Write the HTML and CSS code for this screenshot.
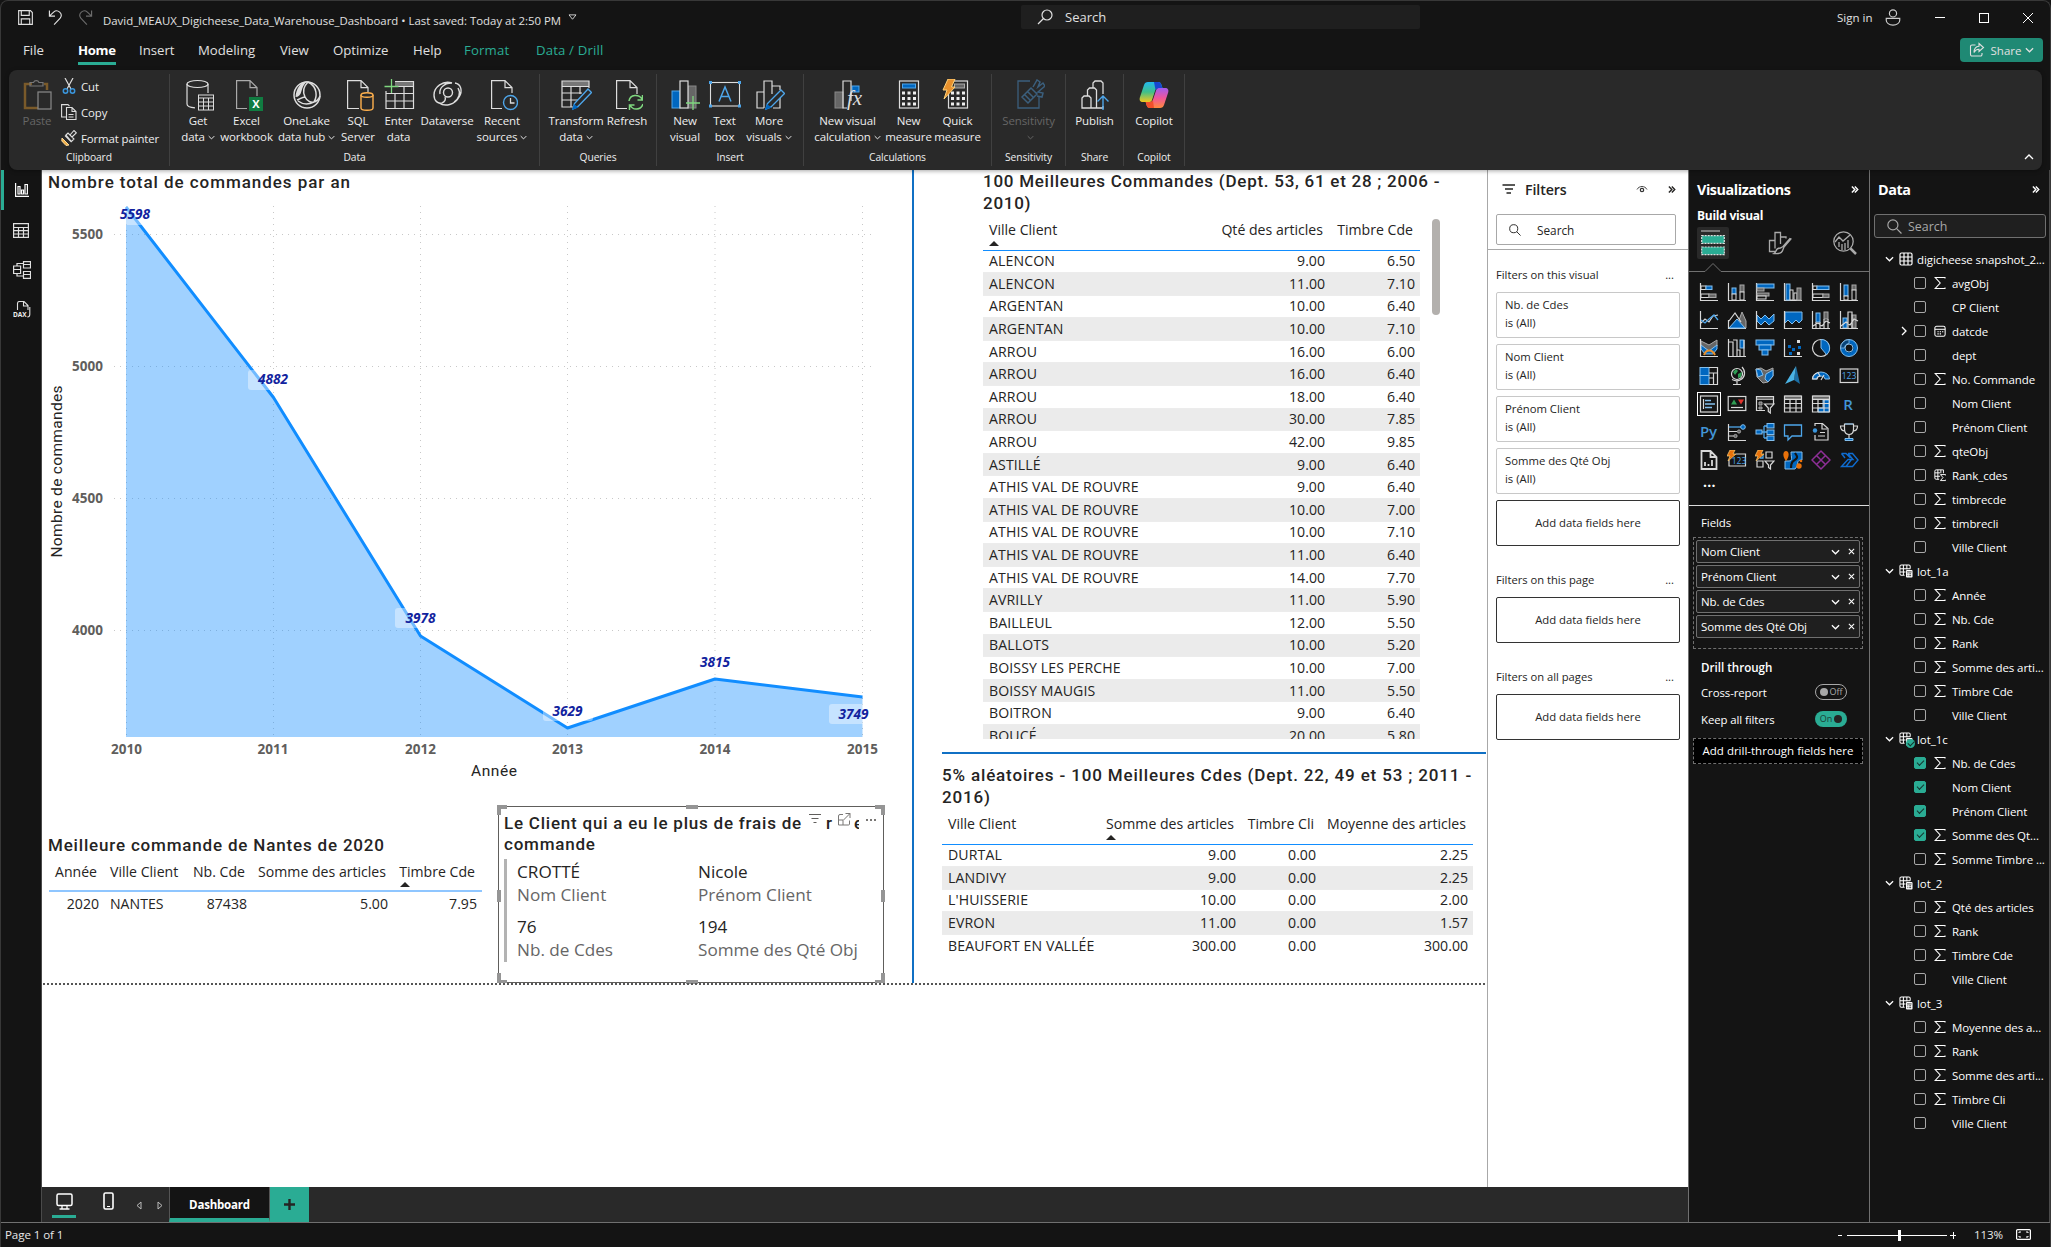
FILE: index.html
```html
<!DOCTYPE html>
<html lang="en">
<head>
<meta charset="utf-8">
<title>David_MEAUX_Digicheese_Data_Warehouse_Dashboard</title>
<link rel="stylesheet" href="styles.css">
</head>
<body>
<svg width="0" height="0" class="defs" aria-hidden="true">
  <symbol id="sigma" viewBox="0 0 12 14"><path d="M11 2.5V1.5H1.2L6.2 7 1.2 12.5H11v-1" fill="none" stroke="currentColor" stroke-width="1.1"/></symbol>
  <symbol id="chev" viewBox="0 0 10 6"><path d="M1 1l4 4 4-4" fill="none" stroke="currentColor" stroke-width="1.4"/></symbol>
  <symbol id="dbl" viewBox="0 0 9 9"><path d="M1 1l3.3 3.5L1 8M4.3 1l3.3 3.5L4.3 8" fill="none" stroke="currentColor" stroke-width="1.6"/></symbol>
  <symbol id="mag" viewBox="0 0 14 14"><circle cx="5.5" cy="5.5" r="4.7" fill="none" stroke="currentColor" stroke-width="1.1"/><path d="M9 9l4.5 4.5" stroke="currentColor" stroke-width="1.1"/></symbol>
  <symbol id="tbl" viewBox="0 0 14 14"><rect x="1" y="1" width="12" height="12" rx="1.5" fill="none" stroke="currentColor" stroke-width="1.2"/><path d="M1 5h12M1 9h12M5 1v12M9 1v12" stroke="currentColor" stroke-width="1.2"/></symbol>
  <symbol id="tblc" viewBox="0 0 15 15"><path d="M6 12H2.500a1.500 1.500 0 0 1-1.500-1.500V2.500A1.500 1.500 0 0 1 2.500 1h8A1.500 1.500 0 0 1 12 2.500V5M1 5h11M1 8.500h6M4.700 1v11M8.400 1v5" fill="none" stroke="currentColor" stroke-width="1.1"/><rect x="7.500" y="6.500" width="7" height="8" rx="1" fill="currentColor"/><path d="M8.500 8.500h5M9 10.500h1M11 10.500h2M9 12.500h1M11 12.500h2" stroke="#141414" stroke-width=".9"/></symbol>
  <symbol id="xx" viewBox="0 0 8 8"><path d="M1 1l6 6M7 1L1 7" stroke="currentColor" stroke-width="1.2"/></symbol>
</svg>

<header class="titlebar">
  <svg class="t-save" viewBox="0 0 16 16"><path d="M.7.700h12.600l2 2v12.600H.7zM3.500.7v5h8.500v-5M3.500 15V9.500h9V15" fill="none" stroke="#e0e0e0" stroke-width="1.200"/></svg>
  <svg class="t-undo" viewBox="0 0 16 18"><path d="M1.500 1.500v6h6M1.700 7.300L6 3.200a4.800 4.800 0 0 1 7 6.500L6.500 16.500" fill="none" stroke="#e0e0e0" stroke-width="1.200"/></svg>
  <svg class="t-redo" viewBox="0 0 16 18"><path d="M14.500 1.500v6h-6M14.300 7.300L10 3.200a4.800 4.800 0 0 0-7 6.500l6.500 6.800" fill="none" stroke="#6b6b6b" stroke-width="1.200"/></svg>
  <span class="t-name">David_MEAUX_Digicheese_Data_Warehouse_Dashboard • Last saved: Today at 2:50 PM</span>
  <svg class="t-drop" viewBox="0 0 10 8"><path d="M1 1h8L5 6z" fill="none" stroke="#e0e0e0"/></svg>
  <div class="t-search"><svg viewBox="0 0 16 16"><circle cx="10" cy="6" r="5" fill="none" stroke="#e0e0e0" stroke-width="1.200"/><path d="M6.500 9.500L1 15" stroke="#e0e0e0" stroke-width="1.200"/></svg><span>Search</span></div>
  <span class="t-sign">Sign in</span>
  <svg class="t-user" viewBox="0 0 20 20"><circle cx="10" cy="6" r="4" fill="none" stroke="#ccc" stroke-width="1.300"/><path d="M2.500 11.500h15v2c0 3-3 5.500-7.500 5.500s-7.500-2.500-7.500-5.500z" fill="none" stroke="#ccc" stroke-width="1.300"/></svg>
  <svg class="t-min" viewBox="0 0 12 12"><path d="M1 6.500h10" stroke="#fff"/></svg>
  <svg class="t-max" viewBox="0 0 12 12"><rect x="1.500" y="1.500" width="9" height="9" fill="none" stroke="#fff"/></svg>
  <svg class="t-close" viewBox="0 0 12 12"><path d="M1 1l10 10M11 1L1 11" stroke="#fff"/></svg>
</header>

<nav class="menu">
  <span class="m1">File</span><span class="m2 on">Home</span><span class="m3">Insert</span><span class="m4">Modeling</span><span class="m5">View</span><span class="m6">Optimize</span><span class="m7">Help</span><span class="m8 ctx">Format</span><span class="m9 ctx">Data / Drill</span>
  <button class="share"><svg viewBox="0 0 16 16"><path d="M6.500 3H3a1.500 1.500 0 0 0-1.500 1.500v8A1.500 1.500 0 0 0 3 14h8.500a1.500 1.500 0 0 0 1.500-1.500V11M10 1.500l4.500 4-4.500 4V7.200C7.500 7 6 8.500 5 10.500c0-3.500 1.500-6 5-6.300z" fill="none" stroke="#e0e0e0" stroke-width="1.100"/></svg>Share<svg class="sc"><use href="#chev"/></svg></button>
</nav>

<section class="ribbon">
  <div class="grp g1">
    <div class="clip">
      <div class="ri paste"><svg viewBox="0 0 32 32"><path d="M11 5H4v24h13M23 5h3v6" fill="none" stroke="#7a5a2a" stroke-width="2.500"/><path d="M9 7V3.500h3.500a3 3 0 0 1 5.500 0H22V7z" fill="none" stroke="#777" stroke-width="1.200"/><rect x="17" y="13" width="13" height="17" fill="#292929" stroke="#8a8a8a" stroke-width="1.200"/></svg><p>Paste</p></div>
      <ul>
        <li><svg viewBox="0 0 16 16"><path d="M4 0l6 11M12 0L6 11" stroke="#ddd" stroke-width="1.200"/><circle cx="4.500" cy="13" r="2.200" fill="none" stroke="#3a96dd" stroke-width="1.500"/><circle cx="11.500" cy="13" r="2.200" fill="none" stroke="#3a96dd" stroke-width="1.500"/></svg>Cut</li>
        <li><svg viewBox="0 0 16 16"><path d="M5 13H.6V.6H7l1.500 1.500M5.500 3.500h5.500l4 4v8H5.500zM11 3.500v4h4M7.500 10.500h5M7.500 13h5" fill="none" stroke="#ddd" stroke-width="1.100"/></svg>Copy</li>
        <li><svg viewBox="0 0 16 16"><path d="M1 8l7 7-3 .5L.8 11z" fill="#f2b04a" stroke="#f7d79a"/><path d="M4 5.500l6.500 6.500M5 5l2-2 6 6-2.500 2.500zM9 5l4-4.500 2.300 2.300L11 7" fill="none" stroke="#ddd" stroke-width="1.100"/></svg>Format painter</li>
      </ul>
    </div>
    <h6>Clipboard</h6>
  </div>
  <div class="grp g2">
    <div class="items">
      <div class="ri"><svg viewBox="0 0 32 32"><path d="M26 14V5M5 5v20c0 2 3 3.500 8 3.800" fill="none" stroke="#ddd" stroke-width="1.200"/><ellipse cx="15.500" cy="5" rx="10.500" ry="3.500" fill="none" stroke="#ddd" stroke-width="1.200"/><rect x="16.500" y="16" width="15" height="15" fill="#292929" stroke="#ddd"/><path d="M16.500 19h15M16.500 23h15M16.500 27h15M21.500 19v12M26.500 19v12" stroke="#ddd"/></svg><p>Get<br>data<svg class="c"><use href="#chev"/></svg></p></div>
      <div class="ri"><svg viewBox="0 0 32 32"><path d="M16 29.500H5.600V1.600H19l7 7V17M19 1.600v7h7" fill="none" stroke="#aaa" stroke-width="1.200"/><rect x="18" y="18" width="14" height="14" fill="#107c41"/><text x="25" y="29" class="xl">X</text></svg><p>Excel<br>workbook</p></div>
      <div class="ri"><svg viewBox="0 0 32 32"><circle cx="16" cy="16" r="13" fill="none" stroke="#ddd" stroke-width="1.500"/><path d="M17 2C9 2 5 11 4.500 18c3 0 5-2 6-6 1-4 3-8 6.500-10z" fill="#ddd"/><path d="M17 3c-4 4-6 9-3 15 2 4 6 6 9 5 3-5 4-15-6-20zM6 21c3-1 5-3 8-3M23 23c2 0 5-3 6-6M7 22c4 3 10 4 16 1" fill="none" stroke="#ddd" stroke-width="1.500"/></svg><p>OneLake<br>data hub<svg class="c"><use href="#chev"/></svg></p></div>
      <div class="ri"><svg viewBox="0 0 32 32"><path d="M17 29.500H5.600V1.600H19l7 7V13M19 1.600v7h7" fill="none" stroke="#ddd" stroke-width="1.200"/><path d="M19 16v13c0 3 12 3 12 0V16" fill="#292929" stroke="#ffb14e" stroke-width="1.400"/><ellipse cx="25" cy="16" rx="6" ry="2.300" fill="#292929" stroke="#ffb14e" stroke-width="1.400"/></svg><p>SQL<br>Server</p></div>
      <div class="ri"><svg viewBox="0 0 32 32"><path d="M12 3h18v4H12z" fill="#777"/><path d="M12 2.500h18.500v27H3V12M12 7.500h18.500M3 14.500h27.500M3 22h27.500M12 14.500v15M21 7.500v22" fill="none" stroke="#ddd" stroke-width="1.200"/><path d="M8.500 0v14M1.500 7.500h14" stroke="#7fd77f" stroke-width="1.300"/></svg><p>Enter<br>data</p></div>
      <div class="ri"><svg viewBox="0 0 32 32"><path d="M21 4C12 1 3 8 3 16c0 6 4 9 8 8 3-1 4-4 3-6M24 4c6 1 8 8 4 14-4 8-14 10-20 6M21 4c-9 0-13 6-12 11M23 23c5-3 7-9 4-14" fill="none" stroke="#ddd" stroke-width="1.400"/><circle cx="17" cy="13.500" r="4.500" fill="none" stroke="#ddd" stroke-width="1.400"/></svg><p>Dataverse</p></div>
      <div class="ri"><svg viewBox="0 0 32 32"><path d="M16 29.500H5.600V1.600H19l7 7V14M19 1.600v7h7" fill="none" stroke="#ddd" stroke-width="1.200"/><circle cx="24.500" cy="23.500" r="7" fill="#292929" stroke="#4ea6ea" stroke-width="1.400"/><path d="M24.500 19v5h4" fill="none" stroke="#ddd" stroke-width="1.300"/></svg><p>Recent<br>sources<svg class="c"><use href="#chev"/></svg></p></div>
    </div>
    <h6>Data</h6>
  </div>
  <div class="grp g3">
    <div class="items">
      <div class="ri"><svg viewBox="0 0 32 32"><path d="M2 2h27v5H2z" fill="#777"/><path d="M29 9V2H2v26h12M2 7.500h27M2 14h20M2 21h16M11 7.500V28M20 7.500V15" fill="none" stroke="#ddd" stroke-width="1.200"/><path d="M13 30l1.500-5.500L28 10l3.500 3.500L18 27.500z" fill="#292929" stroke="#4ea6ea" stroke-width="1.400"/><path d="M12 31l2-6 4.500 3.500z" fill="#0067c0"/></svg><p>Transform<br>data<svg class="c"><use href="#chev"/></svg></p></div>
      <div class="ri"><svg viewBox="0 0 32 32"><path d="M16 29.500H5.600V1.600H19l7 7V15M19 1.600v7h7" fill="none" stroke="#ddd" stroke-width="1.200"/><path d="M18 22c1-7 10-7 13-2M31.500 16v5h-5M32 25c-2 6-10 7-13 1M18.500 31v-5h5" fill="none" stroke="#7fd77f" stroke-width="1.500"/></svg><p>Refresh</p></div>
    </div>
    <h6>Queries</h6>
  </div>
  <div class="grp g4">
    <div class="items">
      <div class="ri"><svg viewBox="0 0 32 32"><rect x="3" y="12" width="8" height="17" fill="#0067c0" stroke="#4ea6ea"/><rect x="19" y="7" width="8" height="22" fill="#666" stroke="#888"/><rect x="11" y="2" width="8" height="27" fill="#292929" stroke="#ddd" stroke-width="1.200"/><path d="M24 17v14M17 24h14" stroke="#7fd77f" stroke-width="1.300"/></svg><p>New<br>visual</p></div>
      <div class="ri"><svg viewBox="0 0 32 32"><rect x="1.500" y="3.500" width="29" height="23.500" fill="none" stroke="#ddd" stroke-width="1.100"/><path d="M0 2h3v3H0zM29 2h3v3h-3zM0 25.500h3v3H0zM29 25.500h3v3h-3z" fill="#4ea6ea"/><path d="M10 22.500L16 8l6 14.500M12.500 17.500h7" fill="none" stroke="#4ea6ea" stroke-width="1.500"/></svg><p>Text<br>box</p></div>
      <div class="ri"><svg viewBox="0 0 32 32"><path d="M11 29H4V13h7M11 29V2h8v13M19 7h8v4M27 19v10h-7" fill="none" stroke="#ddd" stroke-width="1.200"/><path d="M13 30l1.500-5.500L28 11l3.500 3.500L18 28z" fill="#292929" stroke="#4ea6ea" stroke-width="1.400"/><path d="M12 31l2-6 4.500 3.500z" fill="#0067c0"/></svg><p>More<br>visuals<svg class="c"><use href="#chev"/></svg></p></div>
    </div>
    <h6>Insert</h6>
  </div>
  <div class="grp g5">
    <div class="items">
      <div class="ri"><svg viewBox="0 0 32 32"><rect x="20" y="7" width="7" height="6" fill="#0067c0" stroke="#4ea6ea"/><rect x="3" y="13" width="8" height="16" fill="#666" stroke="#888"/><path d="M15 29h-4V2h8v20" fill="none" stroke="#ddd" stroke-width="1.200"/><text x="15" y="26" class="fx">fx</text></svg><p>New visual<br>calculation<svg class="c"><use href="#chev"/></svg></p></div>
      <div class="ri"><svg viewBox="0 0 32 32"><rect x="6.500" y="2" width="19" height="27" fill="none" stroke="#ddd" stroke-width="1.200"/><rect x="9.500" y="5" width="13" height="4" fill="#0067c0" stroke="#4ea6ea"/><path d="M9 14h14M9 19.500h14M9 25h14" stroke="#eee" stroke-width="3" stroke-dasharray="3 2.500"/></svg><p>New<br>measure</p></div>
      <div class="ri"><svg viewBox="0 0 32 32"><rect x="6.500" y="2" width="19" height="27" fill="none" stroke="#ddd" stroke-width="1.200"/><rect x="12.500" y="5" width="10" height="4" fill="#666" stroke="#aaa"/><path d="M9 14h14M9 19.500h14M9 25h14" stroke="#eee" stroke-width="3" stroke-dasharray="3 2.500"/><path d="M6 0h7L9.500 8H13L2 20l3-9H1z" fill="#e8912d" stroke="#ffd27a"/></svg><p>Quick<br>measure</p></div>
    </div>
    <h6>Calculations</h6>
  </div>
  <div class="grp g6">
    <div class="items">
      <div class="ri off"><svg viewBox="0 0 32 32"><path d="M17 2H5v27h21V18" fill="none" stroke="#3b5f7d" stroke-width="1.300"/><path d="M9 18l9-9 6 6-9 9zM12 16l5 5M15 13l5 5M20 8l4-7 3 2-2 5 5-4 2 3-7 6 5 1-1 4-5-1" fill="none" stroke="#3b5f7d" stroke-width="1.500"/></svg><p>Sensitivity<br><svg class="c"><use href="#chev"/></svg></p></div>
    </div>
    <h6>Sensitivity</h6>
  </div>
  <div class="grp g7">
    <div class="items">
      <div class="ri"><svg viewBox="0 0 32 32"><path d="M3 29V19l2-2h5l2 2v10zM8.500 17v-6l2-2h5l2 2v18H12M14 9V4l2-2h6l2 2v11M17 29h7v-2" fill="none" stroke="#ddd" stroke-width="1.300"/><path d="M24 31V17M18.500 22.500L24 17l5.500 5.500" fill="none" stroke="#4ea6ea" stroke-width="1.400"/></svg><p>Publish</p></div>
    </div>
    <h6>Share</h6>
  </div>
  <div class="grp g8">
    <div class="items">
      <div class="ri"><svg viewBox="0 0 32 32"><defs><linearGradient id="cpa" x1="0" y1="0" x2="0" y2="1"><stop offset="0" stop-color="#22b8f0"/><stop offset=".5" stop-color="#3fc08a"/><stop offset="1" stop-color="#f4c81c"/></linearGradient><linearGradient id="cpb" x1="0" y1="0" x2="0" y2="1"><stop offset="0" stop-color="#a05cf0"/><stop offset=".5" stop-color="#f0569a"/><stop offset="1" stop-color="#ff8a3c"/></linearGradient></defs><path d="M10 3h10c2 0 3 1 3.500 3l1 3h-4c-2 0-3 1-3.500 3l-3 9c-.5 1.500-1.500 2-3 2H5c-3 0-4-2-3-5L6 6c.6-2 2-3 4-3z" fill="url(#cpa)"/><path d="M22 29H12c-2 0-3-1-3.500-3l-.8-3h4c2 0 3-1 3.500-3l3-9c.5-1.500 1.500-2 3-2H27c3 0 4 2 3 5l-4 12c-.6 2-2 3-4 3z" fill="url(#cpb)"/><path d="M16 3h4c2 0 3 1 3.500 3l1 3H21c-2 0-3 1-3.500 2z" fill="#1747d1"/><path d="M16 29h-4c-2 0-3-1-3.500-3l-.8-3H12c1.500 0 2.500-.6 3-1.500z" fill="#f0502c"/></svg><p>Copilot</p></div>
    </div>
    <h6>Copilot</h6>
  </div>
  <svg class="collapse" viewBox="0 0 10 6"><path d="M1 5l4-4 4 4" fill="none" stroke="#fff" stroke-width="1.300"/></svg>
</section>

<main>
  <aside class="rail">
    <div class="on"><svg width="14" height="14" viewBox="0 0 14 14"><path d="M.6 0v13.400H14M3 11V3.500h2V11zM6.500 11V7h2v4zM10 11V1.500h2.400V11z" fill="none" stroke="#fff" stroke-width="1.200"/></svg></div>
    <div><svg width="16" height="15" viewBox="0 0 16 15"><path d="M.6.700h14.800v13.600H.6zM.6 4.500h14.800M.6 7.700h14.800M.6 11h14.800M5.500 4.500v10M10.500 4.500v10" fill="none" stroke="#e0e0e0" stroke-width="1.200"/></svg></div>
    <div><svg width="18" height="18" viewBox="0 0 18 18"><path d="M.6 5h7v7.500h-7zM.6 8.500h7M10.500.7h7V7h-7zM10.500 3.500h7M10.500 10.500h7v6.800h-7zM10.500 13.500h7M4 5V2.500h6.500M4 12.500V15h6.500" fill="none" stroke="#e0e0e0" stroke-width="1.200"/></svg></div>
    <div><svg width="18" height="18" viewBox="0 0 18 18"><path d="M4.500 9V2.500a2 2 0 0 1 2-2H11l4 4V9M10.500.7V5h4.500M16.800 6v7.500a2.500 2.500 0 0 1-2.500 2.500" fill="none" stroke="#e0e0e0" stroke-width="1.100"/><text x="0" y="16" class="dax">DAX</text></svg></div>
  </aside>

  <div class="center">
    <div class="canvas">
      <svg class="chart" width="865" height="620" viewBox="43 170 865 620">
        <text x="48" y="187.500" class="din" textLength="302">Nombre total de commandes par an</text>
        <path d="M114 234.500H872M114 366.500H872M114 498.500H872M114 630.500H872M126.500 206V737M273.500 206V737M420.500 206V737M567.500 206V737M715 206V737M862.500 206V737" class="grid"/>
        <path d="M126 207L273.500 397.500 420.500 636 567.500 728 715 679 862.500 697V737H126z" class="area"/>
        <path d="M126 207L273.500 397.500 420.500 636 567.500 728 715 679 862.500 697" class="line"/>
        <g class="lb"><rect x="111" y="205" width="50" height="20" rx="3"/><rect x="248" y="370" width="50" height="20" rx="3"/><rect x="395" y="608" width="50" height="20" rx="3"/><rect x="543" y="701" width="50" height="20" rx="3"/><rect x="829" y="704" width="50" height="20" rx="3"/></g>
        <g class="lt"><text x="135" y="218.500">5598</text><text x="273" y="383.500">4882</text><text x="420.500" y="622.500">3978</text><text x="567.500" y="715.500">3629</text><text x="715" y="666.500">3815</text><text x="853.500" y="718.500">3749</text></g>
        <g class="ya"><text x="103" y="239">5500</text><text x="103" y="371">5000</text><text x="103" y="503">4500</text><text x="103" y="635">4000</text></g>
        <g class="xa"><text x="126.500" y="753.500">2010</text><text x="273" y="753.500">2011</text><text x="420.500" y="753.500">2012</text><text x="567.500" y="753.500">2013</text><text x="715" y="753.500">2014</text><text x="862.500" y="753.500">2015</text></g>
        <text x="494" y="775.500" class="at" textLength="46">Année</text>
        <text transform="translate(61.500 471.500) rotate(-90)" class="at" textLength="172">Nombre de commandes</text>
      </svg>

      <section class="vis nantes">
        <h2>Meilleure commande de Nantes de 2020</h2>
        <table>
          <colgroup><col style="width:55px"><col style="width:82px"><col style="width:66px"><col style="width:141px"><col style="width:89px"></colgroup>
          <thead><tr><th class="r">Année</th><th>Ville Client</th><th class="r">Nb. Cde</th><th class="r">Somme des articles</th><th class="r srt">Timbre Cde</th></tr></thead>
          <tbody><tr><td class="r">2020</td><td>NANTES</td><td class="r">87438</td><td class="r">5.00</td><td class="r">7.95</td></tr></tbody>
        </table>
      </section>

      <section class="vis card">
        <h2>Le Client qui a eu le plus de frais de<br>commande</h2>
        <dl><div><dt>CROTTÉ</dt><dd>Nom Client</dd></div><div><dt>Nicole</dt><dd>Prénom Client</dd></div><div><dt>76</dt><dd>Nb. de Cdes</dd></div><div><dt>194</dt><dd>Somme des Qté Obj</dd></div></dl>
        <div class="tools">
          <svg width="18" height="18" viewBox="0 0 18 18"><path d="M3 3.500h12M5.500 7.500h7M7.500 11.500h3" stroke="#605e5c" stroke-width="1.100"/></svg><b>r</b>
          <svg width="18" height="18" viewBox="0 0 18 18"><path d="M8 3.500H5a1.500 1.500 0 0 0-1.500 1.500v9h10a1 1 0 0 0 1-1V9.500M3.500 9H8v5M10.500 2.500h4.500V7M15 2.500L8.500 9" fill="none" stroke="#797775"/></svg><b class="part">e</b>
          <svg width="12" height="12" viewBox="0 0 12 12"><path d="M1 6h2M5 6h2M9 6h2" stroke="#797775" stroke-width="2"/></svg>
        </div>
        <i class="h h-tl"></i><i class="h h-t"></i><i class="h h-tr"></i><i class="h h-l"></i><i class="h h-r"></i><i class="h h-bl"></i><i class="h h-b"></i><i class="h h-br"></i>
      </section>

      <section class="vis top100">
        <h2>100 Meilleures Commandes (Dept. 53, 61 et 28 ; 2006 -<br>2010)</h2>
        <div class="scroll">
        <table>
          <colgroup><col style="width:233px"><col style="width:114px"><col style="width:90px"></colgroup>
          <thead><tr><th class="srt">Ville Client</th><th class="r">Qté des articles</th><th class="r">Timbre Cde</th></tr></thead>
          <tbody>
            <tr><td>ALENCON</td><td>9.00</td><td>6.50</td></tr>
            <tr><td>ALENCON</td><td>11.00</td><td>7.10</td></tr>
            <tr><td>ARGENTAN</td><td>10.00</td><td>6.40</td></tr>
            <tr><td>ARGENTAN</td><td>10.00</td><td>7.10</td></tr>
            <tr><td>ARROU</td><td>16.00</td><td>6.00</td></tr>
            <tr><td>ARROU</td><td>16.00</td><td>6.40</td></tr>
            <tr><td>ARROU</td><td>18.00</td><td>6.40</td></tr>
            <tr><td>ARROU</td><td>30.00</td><td>7.85</td></tr>
            <tr><td>ARROU</td><td>42.00</td><td>9.85</td></tr>
            <tr><td>ASTILLÉ</td><td>9.00</td><td>6.40</td></tr>
            <tr><td>ATHIS VAL DE ROUVRE</td><td>9.00</td><td>6.40</td></tr>
            <tr><td>ATHIS VAL DE ROUVRE</td><td>10.00</td><td>7.00</td></tr>
            <tr><td>ATHIS VAL DE ROUVRE</td><td>10.00</td><td>7.10</td></tr>
            <tr><td>ATHIS VAL DE ROUVRE</td><td>11.00</td><td>6.40</td></tr>
            <tr><td>ATHIS VAL DE ROUVRE</td><td>14.00</td><td>7.70</td></tr>
            <tr><td>AVRILLY</td><td>11.00</td><td>5.90</td></tr>
            <tr><td>BAILLEUL</td><td>12.00</td><td>5.50</td></tr>
            <tr><td>BALLOTS</td><td>10.00</td><td>5.20</td></tr>
            <tr><td>BOISSY LES PERCHE</td><td>10.00</td><td>7.00</td></tr>
            <tr><td>BOISSY MAUGIS</td><td>11.00</td><td>5.50</td></tr>
            <tr><td>BOITRON</td><td>9.00</td><td>6.40</td></tr>
            <tr><td>BOUCÉ</td><td>20.00</td><td>5.80</td></tr>
          </tbody>
        </table>
        </div>
        <i class="bar"></i>
      </section>

      <section class="vis alea">
        <h2>5% aléatoires - 100 Meilleures Cdes (Dept. 22, 49 et 53 ; 2011 -<br>2016)</h2>
        <table>
          <colgroup><col style="width:158px"><col style="width:141px"><col style="width:80px"><col style="width:152px"></colgroup>
          <thead><tr><th>Ville Client</th><th class="r srt">Somme des articles</th><th class="r">Timbre Cli</th><th class="r">Moyenne des articles</th></tr></thead>
          <tbody>
            <tr><td>DURTAL</td><td>9.00</td><td>0.00</td><td>2.25</td></tr>
            <tr><td>LANDIVY</td><td>9.00</td><td>0.00</td><td>2.25</td></tr>
            <tr><td>L'HUISSERIE</td><td>10.00</td><td>0.00</td><td>2.00</td></tr>
            <tr><td>EVRON</td><td>11.00</td><td>0.00</td><td>1.57</td></tr>
            <tr><td>BEAUFORT EN VALLÉE</td><td>300.00</td><td>0.00</td><td>300.00</td></tr>
          </tbody>
        </table>
      </section>
      <i class="vline"></i><i class="hline"></i><i class="edge"></i>
    </div>
  </div>

  <aside class="filters">
    <div class="fhead"><svg width="14" height="10" viewBox="0 0 14 10"><path d="M.5 1h12.500M3 5h8M4.500 9h4.500" stroke="#252423" stroke-width="1.400"/></svg><b>Filters</b><svg class="eye" width="12" height="8" viewBox="0 0 12 8"><path d="M1 4.500C3 .5 9 .5 11 4.500" fill="none" stroke="#444"/><circle cx="6" cy="5" r="1.700" fill="none" stroke="#333" stroke-width="1.200"/></svg><svg width="8" height="9"><use href="#dbl"/></svg></div>
    <div class="fsearch"><svg width="12" height="12"><use href="#mag"/></svg>Search</div>
    <h3>Filters on this visual<i>...</i></h3>
    <div class="fc">Nb. de Cdes<br>is (All)</div>
    <div class="fc">Nom Client<br>is (All)</div>
    <div class="fc">Prénom Client<br>is (All)</div>
    <div class="fc">Somme des Qté Obj<br>is (All)</div>
    <div class="fa">Add data fields here</div>
    <h3>Filters on this page<i>...</i></h3>
    <div class="fa">Add data fields here</div>
    <h3>Filters on all pages<i>...</i></h3>
    <div class="fa">Add data fields here</div>
  </aside>

  <aside class="viz">
    <div class="ph"><b>Visualizations</b><svg width="8" height="9"><use href="#dbl"/></svg></div>
    <h4>Build visual</h4>
    <div class="tabs">
      <span class="on"><svg width="24" height="26" viewBox="0 0 24 26"><path d="M0 1h19" stroke="#ccc" stroke-width="1.200"/><rect x=".7" y="5.700" width="22.600" height="7.600" fill="#2aac94" stroke="#ddd" stroke-width="1.200" stroke-dasharray="2 1"/><rect x=".7" y="17" width="22.600" height="7.600" fill="#2aac94" stroke="#ddd" stroke-width="1.200" stroke-dasharray="2 1"/></svg></span>
      <span><svg width="24" height="24" viewBox="0 0 24 24"><path d="M8 20.500H1.500V9.500H7v8M7 9.500v-8h5.500V13M12.500 6H18v1.500M22 7.500l-7 8-2.500 1.500c-3 0-4 1-4.500 3-.5 1.500-1 2-2 2.500 4 .5 8 0 9-4l1-2.500 7-8z" fill="none" stroke="#aaa" stroke-width="1.300"/></svg></span>
      <span><svg width="24" height="24" viewBox="0 0 24 24"><circle cx="10.500" cy="10.500" r="9.700" fill="none" stroke="#aaa" stroke-width="1.300"/><path d="M2 11l4-5 4 4 7-6M6 16v-5M9 19v-6M12 19v-7M15 17V9" fill="none" stroke="#aaa" stroke-width="1.300"/><path d="M17.500 17.500l5.500 5.500" stroke="#aaa" stroke-width="2.500"/></svg></span>
    </div>
    <svg class="notch" width="180" height="9" viewBox="0 0 180 9"><path d="M0 8.500h16l8-8 8 8h148" fill="none" stroke="#707070"/></svg>
    <div class="vg">
      <svg viewBox="0 0 20 20"><path d="M1.500 1v17.500H19" class="w"/><rect x="2" y="4" width="5" height="3.500" class="k"/><rect x="7" y="4" width="6" height="3.500" class="b"/><rect x="2" y="12" width="8" height="3.500" class="k"/><rect x="10" y="12" width="7" height="3.500" class="g"/></svg>
      <svg viewBox="0 0 20 20"><path d="M1.500 1v17.500H19" class="w"/><rect x="5" y="6" width="4" height="6" class="b"/><rect x="5" y="12" width="4" height="6" class="k"/><rect x="13" y="3" width="4" height="7" class="g"/><rect x="13" y="10" width="4" height="8" class="k"/></svg>
      <svg viewBox="0 0 20 20"><path d="M1.500 1v17.500H19" class="w"/><rect x="2" y="2" width="17" height="4" class="b"/><rect x="2" y="6" width="7" height="3" class="g"/><rect x="2" y="11" width="12" height="3" class="g"/><rect x="2" y="14" width="9" height="3" class="k"/></svg>
      <svg viewBox="0 0 20 20"><path d="M1.500 1v17.500H19" class="w"/><rect x="3" y="2" width="4" height="16" class="b"/><rect x="7" y="8" width="3" height="10" class="k"/><rect x="11" y="11" width="3" height="7" class="k"/><rect x="14" y="6" width="4" height="12" class="g"/></svg>
      <svg viewBox="0 0 20 20"><path d="M1.500 1v17.500H19" class="w"/><rect x="2" y="4" width="4" height="3.500" class="k"/><rect x="6" y="4" width="12" height="3.500" class="b"/><rect x="2" y="12" width="10" height="3.500" class="k"/><rect x="12" y="12" width="6" height="3.500" class="g"/></svg>
      <svg viewBox="0 0 20 20"><path d="M1.500 1v17.500H19" class="w"/><rect x="5" y="3" width="4" height="11" class="b"/><rect x="5" y="14" width="4" height="4" class="k"/><rect x="13" y="3" width="4" height="5" class="g"/><rect x="13" y="8" width="4" height="10" class="k"/></svg>

      <svg viewBox="0 0 20 20"><path d="M1.500 1v17.500H19M2 13l4-4 4 3 4-6 5-1" class="w"/><path d="M2 10l4 3 4-4 5-4 4 5" class="l"/></svg>
      <svg viewBox="0 0 20 20"><path d="M9 18l6-16 4 9v7z" class="g"/><path d="M1.500 10v8.500H19M2 11l6-8 6 9" class="w"/><path d="M2 18l8-9 8 9z" class="b"/></svg>
      <svg viewBox="0 0 20 20"><path d="M2 5l4 4 4-4 4 4 5-5v7l-5 4-4-4-4 4-4-4z" class="b"/><path d="M1.500 1v17.500H19" class="w"/></svg>
      <svg viewBox="0 0 20 20"><path d="M2 2h17v8l-3 3-3-3-4 4-4-4-3 3z" class="b"/><path d="M1.500 1v17.500H19" class="w"/></svg>
      <svg viewBox="0 0 20 20"><rect x="5" y="3" width="4" height="9" class="b"/><rect x="13" y="2" width="4" height="7" class="g"/><path d="M1.500 1v17.500H19M5 12v6M9 12v6M13 9v9M17 9v9M2 16l5-3 4 3 4-5 4 2" class="w"/></svg>
      <svg viewBox="0 0 20 20"><rect x="4" y="8" width="4" height="10" class="b"/><rect x="13" y="5" width="4" height="13" class="g"/><path d="M1.500 1v17.500H19M9 18V2h4v16M2 16l5-4 4 3 4-6 4 2" class="w"/></svg>

      <svg viewBox="0 0 20 20"><path d="M2 3l8 4 8-5v6l-8 5-8-5z" class="g"/><path d="M2 7l8 6 8-6v4l-4 5H6l-4-5z" class="b"/><path d="M5 17c2-6 8-6 11 0" fill="none" stroke="#e8912d" stroke-width="2"/><path d="M1.500 1v17.500H19" class="w"/></svg>
      <svg viewBox="0 0 20 20"><rect x="13" y="2" width="4" height="8" class="b"/><path d="M1.500 1v17.500H19M2 4h4v14M6 2h4v10h3v6M17 2v16M10 12v6" class="w"/></svg>
      <svg viewBox="0 0 20 20"><rect x="1" y="2" width="18" height="5" class="b"/><rect x="4" y="7" width="12" height="5" class="b"/><rect x="7" y="12" width="6" height="5" class="b"/></svg>
      <svg viewBox="0 0 20 20"><path d="M1.500 1v17.500H19" class="w"/><path d="M5 7h3v3H5zM9 10h3v3H9zM15 8h3v3h-3zM6 14h3v3H6z" fill="#0067c0"/><path d="M14 2h3v3h-3zM14 14h3v3h-3z" fill="#ddd"/></svg>
      <svg viewBox="0 0 20 20"><circle cx="10" cy="10" r="8.500" class="w"/><path d="M10 10V1.500A8.500 8.500 0 0 1 15.500 16.500z" class="b"/></svg>
      <svg viewBox="0 0 20 20"><circle cx="10" cy="10" r="6.500" fill="none" stroke="#0067c0" stroke-width="4"/><circle cx="10" cy="10" r="8.500" fill="none" stroke="#83beec"/><circle cx="10" cy="10" r="4" fill="none" stroke="#83beec"/><path d="M10 1.500A8.500 8.500 0 0 0 1.500 10h4A4.500 4.500 0 0 1 10 5.500z" class="kf"/></svg>

      <svg viewBox="0 0 20 20"><rect x="1" y="1.500" width="9" height="8" class="b"/><rect x="1" y="9.500" width="9" height="9" class="b"/><path d="M10 1.500h8.500v17H10M10 7h8.500M14.500 7v11M10 12h4.500" class="w"/></svg>
      <svg viewBox="0 0 20 20"><circle cx="10" cy="8" r="5.500" fill="#141414" stroke="#ddd" stroke-width="1.200"/><path d="M6 6l3-3 2 2-3 4zM11 8l4-2-1 5-3 1z" fill="#2f9e54"/><path d="M15 1c4 4 3 10-1 12.500-3 2-6 1.500-9 0M10 15v3.500M6 18.500h8" class="w"/></svg>
      <svg viewBox="0 0 20 20"><path d="M1 3l5-1 5 3 7-3v8l-5 6-5 1-6-6z" class="g"/><path d="M1 3l5 1 2 5-5 2zM11 8l7-4v6l-5 6-3-3z" class="b"/></svg>
      <svg viewBox="0 0 20 20"><path d="M13 0l4 18-6-4z" fill="#1c6fa5"/><path d="M13 0L2 18l9-4z" fill="#4bb4e6"/></svg>
      <svg viewBox="0 0 20 20"><path d="M1.500 13a8.500 7 0 0 1 17 0H14a4 3 0 0 0-8 0z" class="b"/><path d="M1.500 13A8.500 7 0 0 1 7 6.500l2 3.500a4 3 0 0 0-3 3zM10 14l3-5" class="w"/></svg>
      <svg viewBox="0 0 20 20"><rect x="1.200" y="3" width="17.600" height="13.500" class="w"/><text x="10" y="13.200" class="num">123</text></svg>

      <span class="sel"><svg viewBox="0 0 20 20"><rect x="1.500" y="2" width="17" height="16" class="w"/><path d="M4.500 5v10" class="w"/><path d="M6 6.500h6M6 10h10M6 13.500h7" stroke="#83beec" stroke-width="1.700"/></svg></span>
      <svg viewBox="0 0 20 20"><rect x="1.200" y="2.500" width="17.600" height="14" class="w"/><path d="M4 10.500l3-5 3 5z" fill="#2f9e54"/><path d="M11 5.500h6l-3 5z" fill="#e2342d"/><path d="M4 13.500h12" class="w"/></svg>
      <svg viewBox="0 0 20 20"><path d="M1.500 2.500h17v3h-17z" class="g"/><path d="M10 16.500H1.500v-14h17v7M9.500 10h9.500l-3.700 4v5l-2-1.500V14z" class="w"/><path d="M4 8h3v3H4zM4 13h3v2H4z" class="g"/></svg>
      <svg viewBox="0 0 20 20"><path d="M1.500 2h17v3h-17z" class="g"/><path d="M1.500 2h17v16h-17zM1.500 5.500h17M1.500 9.500h17M1.500 14h17M7 5.500V18M13 5.500V18" class="w"/></svg>
      <svg viewBox="0 0 20 20"><path d="M1.500 2h17v3h-17z" class="g"/><path d="M12 6h6v12H7v-4h5z" class="b"/><path d="M1.500 2h17v16h-17zM1.500 5.500h17M1.500 9.500h17M1.500 14h17M7 5.500V18M13 5.500V18" class="w"/></svg>
      <svg viewBox="0 0 20 20"><text x="9" y="15.500" class="R">R</text></svg>

      <svg viewBox="0 0 20 20" overflow="visible"><text x="9.500" y="14.500" class="R">Py</text></svg>
      <svg viewBox="0 0 20 20"><path d="M1.500 2v16.500H19M2 9.500h8M2 14h5" class="w"/><path d="M2 5h12" class="l"/><circle cx="16" cy="5" r="2.300" class="b"/><circle cx="12" cy="9.500" r="1.600" class="g"/><circle cx="8.500" cy="14" r="1.600" class="g"/></svg>
      <svg viewBox="0 0 20 20"><path d="M6 10h3M9 4v12M9 4h3M9 16h3M9 10h3" class="l"/><rect x="1" y="8" width="6" height="4" class="b"/><rect x="12" y="1.500" width="7" height="4.500" class="b"/><rect x="12" y="8" width="7" height="4.500" class="b"/><rect x="12" y="14" width="7" height="4.500" class="b"/></svg>
      <svg viewBox="0 0 20 20"><path d="M1.500 3h17v11H9l-4 4v-4H1.500z" class="l"/></svg>
      <svg viewBox="0 0 20 20"><path d="M4 4V1.500h7.500L17 6.500V18H4v-5M11 2v5h5M9 10.500h5M7 14h7" class="w"/><circle cx="4" cy="8.500" r="2.200" fill="#3a96dd"/></svg>
      <svg viewBox="0 0 20 20"><path d="M5.500 2h9v5c0 4-2 5.500-4.500 5.500S5.500 11 5.500 7zM5.500 4H1.500c0 4 2 5 4.500 5M14.500 4h4c0 4-2 5-4.500 5M10 12.500V16" class="w"/><path d="M6 2h8M6 16.500h8v2H6z" class="b"/></svg>

      <svg viewBox="0 0 20 20"><path d="M2.500 1h9l6 6v12h-15zM11.500 1v6h6M6 16v-4M9.500 16v-2M13 16v-6" class="w bold"/></svg>
      <svg viewBox="0 0 20 20"><path d="M9 4h9.500v12H2V10" class="w"/><text x="12" y="14" class="num">123</text><path d="M3 0h5L6 4h3L1 11l2-5H0z" fill="#e8710a" stroke="#ffd27a" stroke-width=".7"/></svg>
      <svg viewBox="0 0 20 20"><path d="M11 2h6v6h-6zM2 11h6v6H2zM10 11h9l-3.500 4v4l-2-1.500V15z" class="w"/><path d="M5 8h3V5" class="l"/><path d="M3 0h5L6 4h3L1 11l2-5H0z" fill="#e8710a" stroke="#ffd27a" stroke-width=".7"/></svg>
      <svg viewBox="0 0 20 20"><path d="M8 2h11v8c-4 0-5 2-4 5l-3 4H2v-8h4c4 0 2-4 2-9z" class="b"/><path d="M12 3c2 3 3 4 1 6-3 2-5 3-5 9" stroke="#141414" stroke-width="2.200" fill="none"/><path d="M3 11C-1 6 0 1 3 1s4 5 0 10z" fill="#e8710a"/><circle cx="16" cy="16" r="2.700" fill="#e8710a"/><circle cx="18" cy="11" r="1.300" fill="#e8710a"/></svg>
      <svg viewBox="0 0 20 20"><path d="M10 1l9 9-9 9-9-9zM5.500 5.500l9 9M14.500 5.500l-9 9" fill="none" stroke="#8e2f97" stroke-width="1.500" stroke-linejoin="round"/></svg>
      <svg viewBox="0 0 20 20"><path d="M2.500 3.500H7l4.500 4.500M2.500 3.500L6 8M9 3.500h4.500L19 10l-5.500 6.500H2.500L9 9.500h5L9 3.500M7 16.500l5.500-7" fill="none" stroke="#0f6cd0" stroke-width="1.400"/></svg>
    </div>
    <div class="more">···</div>
    <h5>Fields</h5>
    <div class="well">
      <div>Nom Client<svg><use href="#chev"/></svg><svg class="x"><use href="#xx"/></svg></div>
      <div>Prénom Client<svg><use href="#chev"/></svg><svg class="x"><use href="#xx"/></svg></div>
      <div>Nb. de Cdes<svg><use href="#chev"/></svg><svg class="x"><use href="#xx"/></svg></div>
      <div>Somme des Qté Obj<svg><use href="#chev"/></svg><svg class="x"><use href="#xx"/></svg></div>
    </div>
    <h4 class="dt">Drill through</h4>
    <div class="tg">Cross-report<span class="switch no"><i></i>Off</span></div>
    <div class="tg t2">Keep all filters<span class="switch">On<i></i></span></div>
    <div class="drill">Add drill-through fields here</div>
  </aside>

  <aside class="data">
    <div class="ph"><b>Data</b><svg width="8" height="9"><use href="#dbl"/></svg></div>
    <div class="dsearch"><svg width="15" height="15"><use href="#mag"/></svg>Search</div>
    <ul>
      <li class="t"><svg class="cv"><use href="#chev"/></svg><svg class="ti"><use href="#tbl"/></svg>digicheese snapshot_2...</li>
      <li><i></i><svg><use href="#sigma"/></svg>avgObj</li>
      <li><i></i><svg></svg>CP Client</li>
      <li class="ex"><svg class="rt" viewBox="0 0 6 10"><path d="M1 1l4 4-4 4" fill="none" stroke="#fff" stroke-width="1.300"/></svg><i></i><svg viewBox="0 0 14 14"><rect x="1" y="1.500" width="12" height="11.500" rx="2" fill="none" stroke="#fff" stroke-width="1.200"/><path d="M1 5h12" stroke="#fff" stroke-width="1.200"/><path d="M4 7.800h7M4 10.300h5" stroke="#fff" stroke-width="1.300" stroke-dasharray="1.500 1.200"/></svg>datcde</li>
      <li><i></i><svg></svg>dept</li>
      <li><i></i><svg><use href="#sigma"/></svg>No. Commande</li>
      <li><i></i><svg></svg>Nom Client</li>
      <li><i></i><svg></svg>Prénom Client</li>
      <li><i></i><svg><use href="#sigma"/></svg>qteObj</li>
      <li><i></i><svg viewBox="0 0 14 14"><path d="M6 12H2.500A1.500 1.500 0 0 1 1 10.500v-8A1.500 1.500 0 0 1 2.500 1H11v4M1 4.500h6M1 8.500h6M4.500 1v11M8 1v4M13.500 7.500v-1H7.500l3 3.500-3 3.500h6v-1" fill="none" stroke="#fff" stroke-width="1.100"/></svg>Rank_cdes</li>
      <li><i></i><svg><use href="#sigma"/></svg>timbrecde</li>
      <li><i></i><svg><use href="#sigma"/></svg>timbrecli</li>
      <li><i></i><svg></svg>Ville Client</li>
      <li class="t"><svg class="cv"><use href="#chev"/></svg><svg class="ti"><use href="#tblc"/></svg>lot_1a</li>
      <li><i></i><svg><use href="#sigma"/></svg>Année</li>
      <li><i></i><svg><use href="#sigma"/></svg>Nb. Cde</li>
      <li><i></i><svg><use href="#sigma"/></svg>Rank</li>
      <li><i></i><svg><use href="#sigma"/></svg>Somme des arti...</li>
      <li><i></i><svg><use href="#sigma"/></svg>Timbre Cde</li>
      <li><i></i><svg></svg>Ville Client</li>
      <li class="t used"><svg class="cv"><use href="#chev"/></svg><svg class="ti"><use href="#tblc"/></svg>lot_1c</li>
      <li class="ck"><i></i><svg><use href="#sigma"/></svg>Nb. de Cdes</li>
      <li class="ck"><i></i><svg></svg>Nom Client</li>
      <li class="ck"><i></i><svg></svg>Prénom Client</li>
      <li class="ck"><i></i><svg><use href="#sigma"/></svg>Somme des Qt...</li>
      <li><i></i><svg><use href="#sigma"/></svg>Somme Timbre ...</li>
      <li class="t"><svg class="cv"><use href="#chev"/></svg><svg class="ti"><use href="#tblc"/></svg>lot_2</li>
      <li><i></i><svg><use href="#sigma"/></svg>Qté des articles</li>
      <li><i></i><svg><use href="#sigma"/></svg>Rank</li>
      <li><i></i><svg><use href="#sigma"/></svg>Timbre Cde</li>
      <li><i></i><svg></svg>Ville Client</li>
      <li class="t"><svg class="cv"><use href="#chev"/></svg><svg class="ti"><use href="#tblc"/></svg>lot_3</li>
      <li><i></i><svg><use href="#sigma"/></svg>Moyenne des a...</li>
      <li><i></i><svg><use href="#sigma"/></svg>Rank</li>
      <li><i></i><svg><use href="#sigma"/></svg>Somme des arti...</li>
      <li><i></i><svg><use href="#sigma"/></svg>Timbre Cli</li>
      <li><i></i><svg></svg>Ville Client</li>
    </ul>
  </aside>

  <div class="pages">
    <span class="pv on"><svg width="17" height="17" viewBox="0 0 17 17"><rect x="1" y="1" width="15" height="11.500" rx="1.500" fill="none" stroke="#fff" stroke-width="1.500"/><path d="M6 13v2.500M11 13v2.500M3.500 16h10" stroke="#fff" stroke-width="1.300"/></svg></span>
    <span class="pv ph2"><svg width="11" height="18" viewBox="0 0 11 18"><rect x="1" y="1" width="9" height="16" rx="1.500" fill="none" stroke="#fff" stroke-width="1.600"/><path d="M4 14.500h3" stroke="#fff"/></svg></span>
    <svg class="nav" width="6" height="9" viewBox="0 0 6 9"><path d="M5 1v7L1 4.500z" fill="none" stroke="#bbb"/></svg>
    <svg class="nav n2" width="6" height="9" viewBox="0 0 6 9"><path d="M1 1v7l4-3.500z" fill="none" stroke="#bbb"/></svg>
    <span class="tab">Dashboard</span>
    <span class="add"><svg width="11" height="11" viewBox="0 0 11 11"><path d="M5.500 0v11M0 5.500h11" stroke="#252423" stroke-width="2.400"/></svg></span>
  </div>
</main>

<footer>
  <span>Page 1 of 1</span>
  <svg width="118" height="14" viewBox="0 0 118 14"><path d="M0 7.500h4M9 7.500h100M112 7.500h7M115.500 4v7" stroke="#fff"/><rect x="60" y="2" width="3" height="11" fill="#fff"/></svg>
  <span class="pc">113%</span>
  <svg class="fit" width="15" height="11" viewBox="0 0 15 11"><rect x=".6" y=".6" width="13.800" height="9.800" rx="1" fill="none" stroke="#fff" stroke-width="1.200"/><path d="M3 4V3h2M10 3h2v1M3 7v1h2M10 8h2V7" fill="none" stroke="#fff"/></svg>
</footer>
</body>
</html>
```

FILE: styles.css
```css
* { box-sizing: border-box; margin: 0; padding: 0; }
html { height: 1247px; overflow: hidden; background: #141414; }
body {
  width: 2051px; height: 1247px; overflow: hidden; display: flex; flex-direction: column;
  background: #141414; color: #fff; font-family: "Open Sans", sans-serif; font-size: 11.3px;
  border: 1px solid #383838; border-bottom: 0; border-radius: 8px 8px 0 0;
}
ul { list-style: none; }
svg { flex: none; display: block; }
i { font-style: normal; }
.defs { position: absolute; }

/* title bar */
.titlebar { height: 34px; display: flex; flex: none; color: #e0e0e0; }
.t-save { width: 15px; height: 15px; margin: 9px 0 0 17px; }
.t-undo { width: 15px; height: 17px; margin: 8px 0 0 15px; }
.t-redo { width: 15px; height: 17px; margin: 8px 0 0 15px; }
.t-name { width: 459px; margin-left: 10px; line-height: 16px; padding-top: 12px; font-size: 11.4px; white-space: nowrap; }
.t-drop { width: 9px; height: 7px; margin: 13px 0 0 6px; }
.t-search { width: 399px; height: 24px; margin: 4px 0 0 444px; background: #1f1f1f; display: flex; align-items: center; font-size: 13px; border-radius: 2px; }
.t-search svg { width: 16px; height: 16px; margin: 0 12px 0 16px; }
.t-sign { margin-left: 417px; width: 42px; line-height: 16px; padding-top: 9px; font-size: 11.5px; white-space: nowrap; }
.t-user { width: 18px; height: 18px; margin: 7px 0 0 5px; }
.t-min { width: 12px; height: 12px; margin: 10px 0 0 32px; }
.t-max { width: 12px; height: 12px; margin: 11px 0 0 32px; }
.t-close { width: 12px; height: 12px; margin: 11px 0 0 32px; }

/* ribbon tabs */
.menu { height: 35px; flex: none; display: flex; color: #e0e0e0; font-size: 13.2px; line-height: 20px; padding: 5px 0 0 22px; }
.menu span { height: 25px; white-space: nowrap; }
.m1 { width: 55px; }
.menu .m2 { width: 38px; margin-right: 23px; border-bottom: 3px solid #2aac94; color: #fff; font-weight: 700; letter-spacing: -.35px; }
.m3 { width: 59px; } .m4 { width: 82px; } .m5 { width: 53px; } .m6 { width: 80px; } .m7 { width: 51px; } .m8 { width: 72px; } .m9 { width: 74px; }
.ctx { color: #2aac94; font-weight: 500; letter-spacing: .15px; }
.share { margin: -2px 7px 0 auto; width: 83px; height: 24px; border: 0; border-radius: 4px; color: #e0e0e0; font: 11.5px "Open Sans", sans-serif; display: flex; align-items: center; justify-content: center; gap: 6px; background: #1f8974; }
.share svg { width: 16px; height: 16px; }
.share .sc { width: 9px; height: 6px; margin-left: -2px; }

/* ribbon */
.ribbon { height: 100px; flex: none; margin: 0 8px; background: #292929; border-radius: 8px; display: flex; position: relative; z-index: 5; box-shadow: 0 1px 4px rgba(0,0,0,.35); }
.grp { border-right: 1px solid #404040; margin: 4px 0; height: 92px; display: flex; flex-direction: column; }
.grp h6 { margin-top: auto; text-align: center; font-size: 10.3px; font-weight: 400; line-height: 14px; padding-bottom: 2px; letter-spacing: -.1px; color: #eee; }
.g1 { width: 161px; } .g2 { width: 370px; } .g3 { width: 117px; } .g4 { width: 147px; } .g5 { width: 188px; } .g6 { width: 74px; } .g7 { width: 58px; } .g8 { width: 61px; }
.items { display: grid; }
.g2 .items { grid-template-columns: 44px 53px 67px 36px 45px 52px 58px; padding-left: 6px; }
.g3 .items { grid-template-columns: 54px 48px; padding-left: 9px; }
.g4 .items { grid-template-columns: 40px 39px 50px; padding-left: 8px; }
.g5 .items { grid-template-columns: 73px 49px 49px; padding-left: 7px; }
.ri { display: flex; flex-direction: column; align-items: center; padding-top: 5px; white-space: nowrap; }
.ri > svg { width: 32px; height: 32px; }
.ri p { margin-top: 2px; text-align: center; font-size: 11.5px; line-height: 16px; letter-spacing: -.1px; color: #eee; }
.ri .c { display: inline-block; width: 7px; height: 5px; margin-left: 3px; vertical-align: 1px; }
.ri.off p { color: #666; }
.xl { font: 700 11px "Open Sans", sans-serif; fill: #fff; text-anchor: middle; }
.fx { font: italic 21px "Liberation Serif", serif; fill: #ddd; }
.clip { display: flex; height: 76px; }
.paste { width: 36px; margin-left: 10px; }
.ri.paste p { color: #666; }
.clip ul { margin: -1px 0 0 6px; }
.clip li { height: 26px; display: flex; align-items: center; gap: 4px; font-size: 11.4px; color: #eee; letter-spacing: -.1px; }
.clip li svg { width: 16px; height: 16px; }
.collapse { width: 10px; height: 6px; margin: 84px 8px 0 auto; }

/* body grid */
main { flex: none; height: 1052px; display: grid; grid-template-columns: 41px 1445px 202px 181px 1fr; grid-template-rows: 1017px 35px; }
.rail { grid-row: 1 / 3; border-right: 1px solid #4a4a4a; }
.rail div { height: 40px; display: flex; align-items: center; padding-left: 12px; }
.rail .on { border-left: 3px solid #2aac94; padding-left: 11px; }
.dax { font: 700 6.500px "Open Sans", sans-serif; fill: #eee; }
.center { background: #fff; }
.canvas { position: relative; height: 1017px; width: 1445px; background: #fff; color: #252423; overflow: hidden; }

.chart { position: absolute; left: 1px; top: 0; }
.din { font: 500 17px Roboto, sans-serif; fill: #252423; }
.grid { fill: none; stroke: #c8c8c8; stroke-width: 1; stroke-dasharray: 1 5; }
.area { fill: #118dff; fill-opacity: .4; }
.line { fill: none; stroke: #118dff; stroke-width: 3; stroke-linejoin: round; }
.lb rect { fill: #fff; fill-opacity: .4; }
.lt text { font: italic 700 13.6px "Open Sans", sans-serif; fill: #12239e; text-anchor: middle; }
.ya text, .xa text { font: 700 13.5px "Open Sans", sans-serif; fill: #605e5c; }
.ya text { text-anchor: end; } .xa text { text-anchor: middle; }
.at { font: 15.500px Roboto, sans-serif; fill: #252423; text-anchor: middle; }

.vis { position: absolute; }
.vis h2 { font: 500 17px/21.500px Roboto, sans-serif; white-space: nowrap; }
table { border-collapse: collapse; table-layout: fixed; font-size: 14.1px; line-height: 20px; }
th { font-weight: 400; text-align: left; white-space: nowrap; position: relative; vertical-align: top; }
td { white-space: nowrap; }
th:first-child, td:first-child { padding-left: 6px; }
.r { text-align: right; }
.srt::after { content: ""; position: absolute; width: 0; height: 0; border: 5px solid transparent; border-top: 0; border-bottom: 5px solid #252423; bottom: 4px; left: 6px; }
.nantes { left: 6px; top: 665px; width: 434px; }
.nantes h2 { letter-spacing: .82px; }
.nantes table { width: 433px; margin: 5px 0 0 1px; }
.nantes th { height: 29px; border-bottom: 2px solid #8fc6ff; padding-right: 7px; }
.nantes td { height: 25px; padding-right: 5px; }
.nantes th:nth-child(2), .nantes td:nth-child(2) { padding-left: 6px; padding-right: 0; }
.nantes th.srt::after { left: 7px; bottom: 3px; }

.card { left: 456px; top: 636px; width: 386px; height: 177px; border: 1px solid #605e5c; background: #fff; padding: 6px 0 0 6px; }
.card h2 { letter-spacing: .78px; line-height: 21px; width: 350px; margin-left: -1px; }
.card dl { display: grid; grid-template-columns: 181px 1fr; grid-template-rows: 55px 48px; border-left: 3px solid #b3b3b3; margin: 4px 0 0 -1px; height: 103px; padding-left: 10px; font-size: 17.15px; line-height: 24px; }
.card dt { height: 24px; padding-top: 1px; } .card dd { color: #666; white-space: nowrap; }
.tools { position: absolute; left: 307px; top: 0; height: 30px; width: 76px; background: #fff; display: flex; align-items: flex-start; padding: 4px 0 0 0; }
.tools b { font: 500 17px/21px Roboto, sans-serif; width: 7px; padding-top: 2px; margin: 0 2px 0 2px; }
.tools .part { width: 5px; overflow: hidden; margin: 0 6px 0 1px; }
.tools svg:last-child { margin-top: 3px; }
.h { position: absolute; width: 10px; height: 10px; border: 0 solid #959595; }
.h-tl { left: -2px; top: -2px; border-width: 4px 0 0 4px; }
.h-tr { right: -2px; top: -2px; border-width: 4px 4px 0 0; }
.h-bl { left: -2px; bottom: -1px; border-width: 0 0 3px 4px; }
.h-br { right: -2px; bottom: -1px; border-width: 0 4px 3px 0; }
.h-t, .h-b { left: 187px; width: 12px; height: 4px; background: #959595; }
.h-t { top: -2px; } .h-b { bottom: -2px; }
.h-l, .h-r { width: 4px; height: 12px; top: 83px; background: #959595; }
.h-l { left: -2px; } .h-r { right: -2px; }

.top100 { left: 941px; top: 1px; }
.top100 h2 { letter-spacing: .74px; }
.scroll { height: 525px; overflow: hidden; padding-top: 6px; width: 437px; }
.top100 table { width: 437px; }
.top100 th, .alea th { height: 30px; border-bottom: 1px solid #118dff; padding-right: 7px; }
.top100 td, .alea td { height: 22.600px; padding-right: 5px; text-align: right; border-bottom: 1px solid #ececec; line-height: 20px; }
.top100 td:first-child, .alea td:first-child { text-align: left; letter-spacing: .12px; }
.top100 tbody tr:nth-child(even) td, .alea tbody tr:nth-child(even) td { background: #ebebeb; }
.bar { position: absolute; left: 449px; top: 48px; width: 8px; height: 96px; border-radius: 4px; background: #b3b0ad; }
.alea { left: 900px; top: 595px; }
.alea h2 { letter-spacing: .85px; }
.alea table { width: 531px; margin-top: 6px; }
.alea tbody tr:last-child td { border-bottom: 0; }
.vline { position: absolute; left: 870px; top: 0; width: 2px; height: 813px; background: #1070c4; }
.hline { position: absolute; left: 900px; top: 582px; width: 544px; height: 2px; background: #1070c4; }
.edge { position: absolute; left: 1px; top: 813px; width: 1443px; height: 2px; background: repeating-linear-gradient(90deg, #555 0 2px, transparent 2px 4px); }

/* filters pane */
.filters { background: #fff; color: #252423; border-left: 1px solid #a8a8a8; font-size: 11.3px; border-right: 1px solid #707070; }
.fhead { display: flex; align-items: center; height: 38px; padding: 0 12px 0 14px; }
.fhead b { font-size: 14.2px; font-weight: 600; margin-left: 9px; letter-spacing: -.1px; }
.eye { margin: 0 20px 0 auto; }
.fsearch { width: 180px; height: 31px; margin: 6px 0 0 8px; border: 1px solid #a8a8a8; border-radius: 2px; display: flex; align-items: center; padding-left: 12px; gap: 16px; font-size: 11.8px; }
.filters h3 { font-weight: 400; font-size: 11.2px; line-height: 16px; margin: 26px 14px 8px 8px; display: flex; justify-content: space-between; }
.fsearch + h3 { border-top: 1px solid #a8a8a8; margin: 4px 0 9px; padding: 17px 14px 0 8px; }
.fc, .fa { width: 184px; height: 46px; margin: 0 0 6px 8px; border: 1px solid #c8c8c8; border-radius: 2px; line-height: 18px; padding: 3px 8px; }
.fa { border-color: #333; display: flex; align-items: center; justify-content: center; margin-bottom: 0; }
.fa + h3 { margin-top: 26px; margin-bottom: 9px; }

/* visualizations pane */
.viz { border-right: 1px solid #707070; grid-row: 1 / 3; }
.ph { display: flex; align-items: center; justify-content: space-between; height: 38px; padding: 0 10px 0 8px; }
.ph b { font-size: 14.4px; font-weight: 700; letter-spacing: -.45px; }
.viz h4 { font-size: 12px; font-weight: 700; line-height: 16px; padding-left: 8px; letter-spacing: -.25px; }
.tabs { display: flex; margin: 3px 0 0 8px; }
.tabs span { width: 32px; height: 32px; display: flex; align-items: center; justify-content: center; }
.tabs .on { background: #292929; border-radius: 2px; }
.tabs span:nth-child(2) { margin-left: 35px; } .tabs span:nth-child(3) { margin-left: 33px; }
.notch { margin-top: 4px; }
.vg { display: grid; grid-template-columns: repeat(6, 28px); grid-auto-rows: 28px; margin: 6px 0 0 6px; place-items: center; }
.vg svg { width: 20px; height: 20px; }
.vg .sel { width: 24px; height: 24px; border: 1px solid #fff; padding: 1px; }
.vg .w { fill: none; stroke: #d8d8d8; stroke-width: 1.2; }
.vg .bold { stroke-width: 1.8; }
.vg .k { fill: #141414; stroke: #d8d8d8; stroke-width: 1; }
.vg .kf { fill: #141414; fill-opacity: .4; stroke: #83beec; stroke-width: .8; }
.vg .g { fill: #666; stroke: #a8a8a8; stroke-width: 1; }
.vg .b { fill: #0067c0; stroke: #83beec; stroke-width: 1; }
.vg .l { fill: none; stroke: #4ea6ea; stroke-width: 1.3; }
.num { font: 8.5px "Open Sans", sans-serif; fill: #4ea6ea; text-anchor: middle; }
.R { font: 600 15px "Open Sans", sans-serif; fill: #4295d6; text-anchor: middle; }
.more { font-size: 14px; font-weight: 700; height: 32px; line-height: 24px; padding-left: 14px; border-bottom: 1px solid #ddd; letter-spacing: .3px; }
.viz h5 { font-weight: 400; font-size: 11.5px; line-height: 16px; margin: 9px 0 6px 12px; letter-spacing: -.1px; }
.well { margin: 0 6px 0 4px; height: 112px; border: 1px dashed #707070; padding: 2px 2px; }
.well div { height: 23px; border: 1px solid #707070; border-radius: 2px; background: #1f1f1f; margin-bottom: 2px; display: flex; align-items: center; padding: 0 4px 0 4px; font-size: 11.5px; letter-spacing: -.08px; }
.well svg { width: 9px; height: 6px; margin-left: auto; }
.well .x { width: 7px; height: 7px; margin-left: 8px; }
.viz .dt { margin: 11px 0 0 4px; font-size: 11.6px; font-weight: 600; letter-spacing: 0; }
.tg { display: flex; justify-content: space-between; align-items: center; height: 16px; margin: 8px 22px 0 12px; font-size: 11.4px; letter-spacing: -.08px; }
.t2 { margin-top: 11px; }
.switch { width: 32px; height: 16px; border-radius: 8px; background: #2aac94; color: #1b3d36; font-size: 9px; line-height: 14px; display: flex; align-items: center; justify-content: center; gap: 2px; }
.switch.no { background: none; border: 1px solid #a8a8a8; color: #a8a8a8; }
.switch i { width: 8px; height: 8px; border-radius: 50%; background: #252525; }
.switch.no i { background: #a8a8a8; }
.drill { margin: 11px 6px 0 4px; height: 26px; background: #000; border: 1px dashed #707070; line-height: 24px; text-align: center; font-size: 11.5px; white-space: nowrap; }

/* data pane */
.data { border-right: 1px solid #4a4a4a; grid-row: 1 / 3; }
.dsearch { width: 172px; height: 24px; margin: 6px 0 9px 4px; border: 1px solid #707070; border-radius: 3px; background: #1f1f1f; display: flex; align-items: center; padding-left: 12px; gap: 6px; font-size: 12.4px; color: #a8a8a8; }
.data .ph { padding-right: 9px; }
.data li { height: 24px; display: flex; align-items: center; padding-left: 44px; white-space: nowrap; font-size: 11.5px; letter-spacing: -.08px; }
.data li i { width: 12px; height: 12px; border: 1px solid #a8a8a8; border-radius: 2px; margin-right: 8px; position: relative; }
.data li > svg { width: 12px; height: 14px; margin-right: 6px; }
.data .ex { padding-left: 31px; }
.data li .rt { width: 6px; height: 10px; margin-right: 7px; }
.data .t { padding-left: 15px; position: relative; }
.data .t .cv { width: 9px; height: 6px; margin-right: 5px; }
.data .t .ti { width: 14px; height: 14px; margin-right: 4px; }
.data .ck i { background: #2aac94; border-color: #2aac94; }
.ck i::after { content: ""; position: absolute; left: 2px; top: 2px; width: 6px; height: 3px; border: solid #14352f; border-width: 0 0 1.5px 1.5px; transform: rotate(-45deg); }
.used::after { content: ""; position: absolute; left: 36px; top: 12px; width: 9px; height: 9px; border-radius: 50%; background: #2aac94; }
.used::before { content: ""; position: absolute; z-index: 1; left: 38px; top: 14px; width: 5px; height: 3px; border: solid #14352f; border-width: 0 0 1px 1px; transform: rotate(-45deg); }

/* page tabs */
.pages { grid-column: 2 / 4; grid-row: 2; background: #292929; display: flex; border-right: 1px solid #707070; }
.pv { width: 24px; height: 31px; margin-left: 10px; display: flex; align-items: center; justify-content: center; border-bottom: 3px solid transparent; }
.pv.on { border-color: #2aac94; }
.ph2 { margin-left: 20px; }
.nav { margin: 14px 0 0 16px; }
.n2 { margin-left: 15px; margin-right: 6px; }
.tab { width: 101px; background: #141414; border: 1px solid #555; border-width: 0 1px; border-bottom: 4px solid #2aac94; text-align: center; line-height: 36px; font-weight: 700; font-size: 11.5px; letter-spacing: -.2px; }
.add { width: 39px; background: #2aac94; display: flex; align-items: center; justify-content: center; }

/* status bar */
footer { height: 24px; flex: none; border-top: 1px solid #707070; display: flex; align-items: center; padding: 0 19px 0 4px; font-size: 11.6px; color: #e8e8e8; letter-spacing: -.1px; }
footer span:first-child { margin-right: auto; }
.pc { margin: 0 13px 0 18px; }
```
